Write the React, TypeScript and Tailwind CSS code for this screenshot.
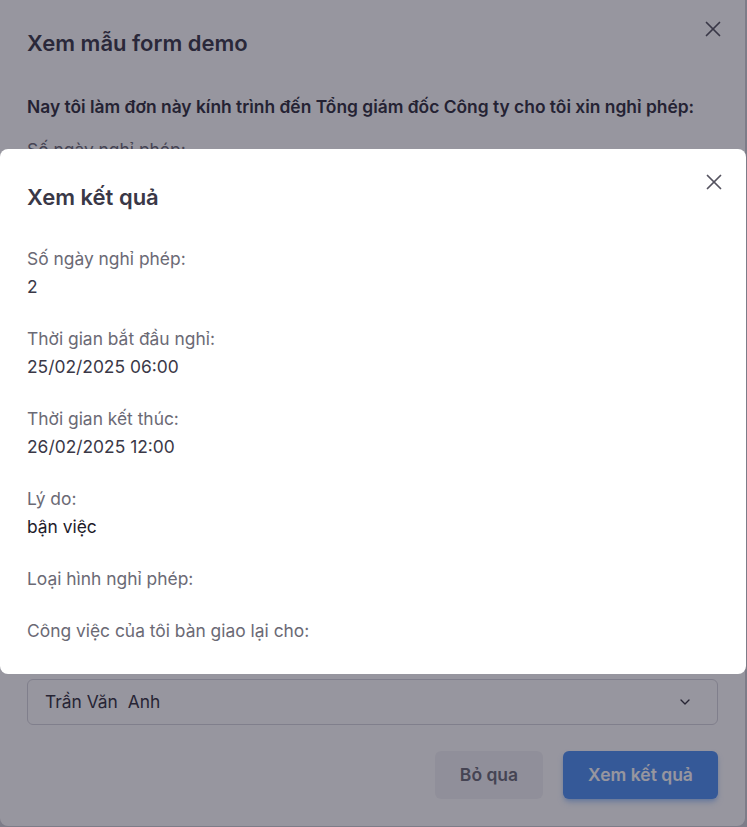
import { ChevronDown, X } from 'lucide-react';

// ─── Data ─────────────────────────────────────────────────────────────────────

const results: { label: string; value?: string; strong?: boolean }[] = [
  { label: 'Số ngày nghỉ phép:', value: '2' },
  { label: 'Thời gian bắt đầu nghỉ:', value: '25/02/2025 06:00' },
  { label: 'Thời gian kết thúc:', value: '26/02/2025 12:00' },
  { label: 'Lý do:', value: 'bận việc', strong: true },
  { label: 'Loại hình nghỉ phép:' },
  { label: 'Công việc của tôi bàn giao lại cho:' },
];

// ─── Page ─────────────────────────────────────────────────────────────────────

export default function App() {
  return (
    <div className="relative h-[827px] w-[747px] overflow-hidden bg-[#cfcfd6] font-['Inter',sans-serif]">
      {/* Form demo dialog (behind) */}
      <div className="flex h-[826px] w-[745px] flex-col rounded-b-lg bg-white px-[27px]">
        <div className="flex items-start justify-between pt-[28px]">
          <h2 className="text-[22px] font-semibold leading-[30px] text-[#3a3847]">Xem mẫu form demo</h2>
          <X className="-mr-[8px] -mt-[12px] h-[26px] w-[26px] text-[#55535f]" strokeWidth={1.6} />
        </div>
        <p className="mt-[36px] text-[17.4px] font-semibold leading-[26px] text-[#2f2d3b]">
          Nay tôi làm đơn này kính trình đến Tổng giám đốc Công ty cho tôi xin nghỉ phép:
        </p>
        <p className="mt-[18px] text-[17.4px] leading-[24px] text-[#6b6a75]">Số ngày nghỉ phép:</p>

        <div className="mt-auto">
          <div className="flex h-[46px] items-center justify-between rounded-md border border-[#d6d5dc] pl-[17px] pr-[24px]">
            <span className="text-[17.4px] text-[#33313d]">Trần Văn&nbsp; Anh</span>
            <ChevronDown className="h-[16px] w-[16px] text-[#33313d]" strokeWidth={2} />
          </div>
          <div className="mt-[26px] mb-[27px] flex justify-end gap-[20px]">
            <button className="h-[48px] w-[108px] rounded-md bg-[#f3f3f6] text-[17.5px] font-semibold text-[#6b6a75]">
              Bỏ qua
            </button>
            <button className="h-[48px] w-[155px] rounded-md bg-[#4d90f2] text-[17.5px] font-semibold text-white shadow-md shadow-[#4d90f2]/40">
              Xem kết quả
            </button>
          </div>
        </div>
      </div>

      {/* Overlay */}
      <div className="absolute inset-0 bg-[#18162a]/45" />

      {/* Result dialog */}
      <div className="absolute left-0 top-[149px] w-[746px] rounded-lg bg-white px-[27px] pb-[29px] pt-[32px]">
        <div className="flex items-start justify-between">
          <h2 className="text-[22px] font-semibold leading-[32px] text-[#3a3847]">Xem kết quả</h2>
          <X className="-mr-[8px] -mt-[12px] h-[26px] w-[26px] text-[#55535f]" strokeWidth={1.6} />
        </div>
        <div className="mt-[32px] flex flex-col gap-[24px]">
          {results.map((r) => (
            <div key={r.label} className="text-[17.4px] leading-[28px]">
              <p className="text-[#6b6a75]">{r.label}</p>
              {r.value && (
                <p className={r.strong ? 'text-[#1e1c2a]' : 'text-[#3a3847]'}>{r.value}</p>
              )}
            </div>
          ))}
        </div>
      </div>
    </div>
  );
}
